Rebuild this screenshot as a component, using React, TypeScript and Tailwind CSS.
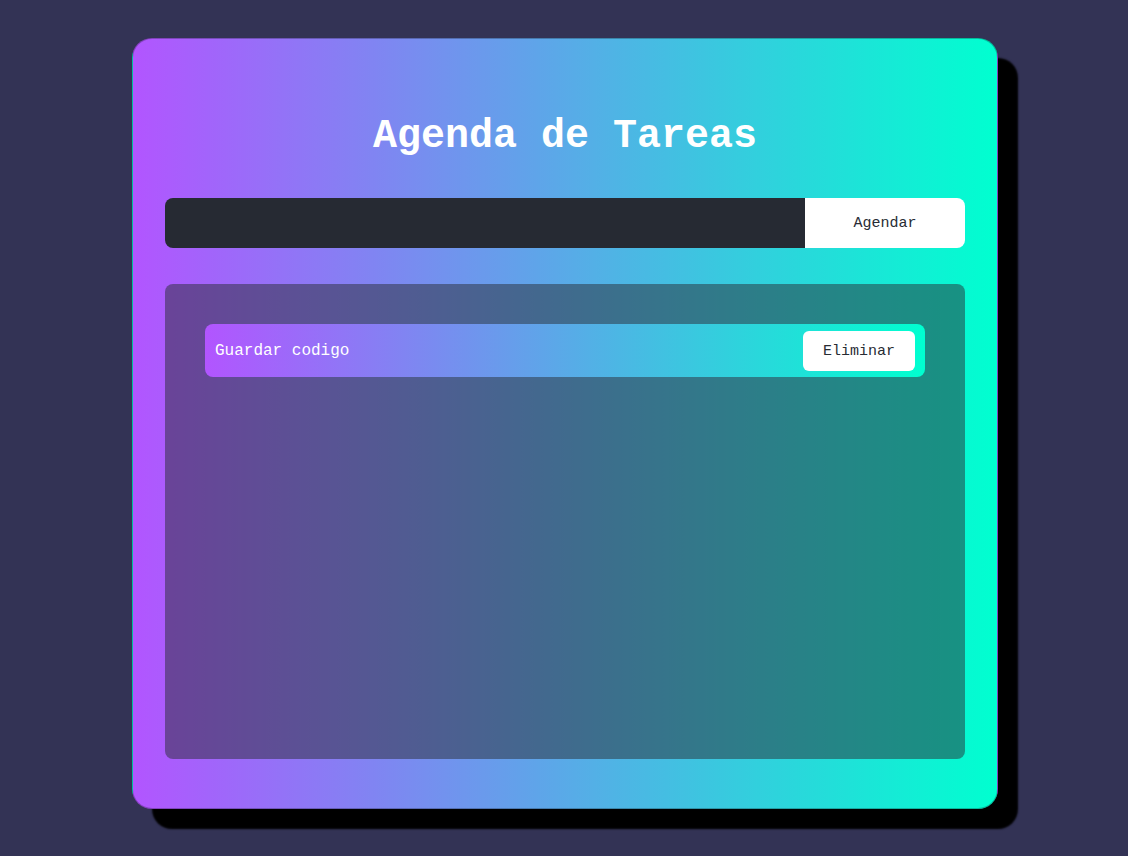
import React, { useState } from 'react';

type Task = { id: number; text: string };

const App: React.FC = () => {
  const [tasks, setTasks] = useState<Task[]>([{ id: 1, text: 'Guardar codigo' }]);
  const [draft, setDraft] = useState('');

  const addTask = () => {
    if (!draft.trim()) return;
    setTasks([...tasks, { id: Date.now(), text: draft.trim() }]);
    setDraft('');
  };

  return (
    <div className="min-h-screen bg-[#333355] pt-[38px] font-['Liberation_Mono','Courier_New',monospace]">
      {/* Card */}
      <div className="ml-[132px] flex h-[771px] w-[866px] flex-col rounded-[20px] border border-black/25 bg-[linear-gradient(to_right,#b255ff,#00ffd0)] px-8 pt-[78px] pb-[49px] shadow-[20px_20px_2px_#000]">
        <h1 className="h-10 text-center text-[40px] leading-10 font-bold text-white">Agenda de Tareas</h1>

        {/* Input row */}
        <div className="mt-[41px] flex h-[50px] overflow-hidden rounded-lg">
          <input
            value={draft}
            onChange={e => setDraft(e.target.value)}
            className="flex-1 bg-[#262a33] px-4 text-base text-white outline-none"
          />
          <button onClick={addTask} className="w-[160px] bg-white pt-[3px] text-[15px] text-[#282c34]">
            Agendar
          </button>
        </div>

        {/* List */}
        <div className="mt-9 flex-1 rounded-lg bg-[#282c34]/50 p-10">
          <ul className="flex flex-col gap-4">
            {tasks.map(task => (
              <li
                key={task.id}
                className="flex h-[53px] items-center justify-between rounded-lg bg-[linear-gradient(to_right,#b255ff,#00ffd0)] px-[10px]"
              >
                <span className="pt-[1px] text-base text-white">{task.text}</span>
                <button
                  onClick={() => setTasks(tasks.filter(t => t.id !== task.id))}
                  className="h-10 w-[112px] rounded-md bg-white pt-[3px] text-[15px] text-[#282c34]"
                >
                  Eliminar
                </button>
              </li>
            ))}
          </ul>
        </div>
      </div>
    </div>
  );
};

export default App;
